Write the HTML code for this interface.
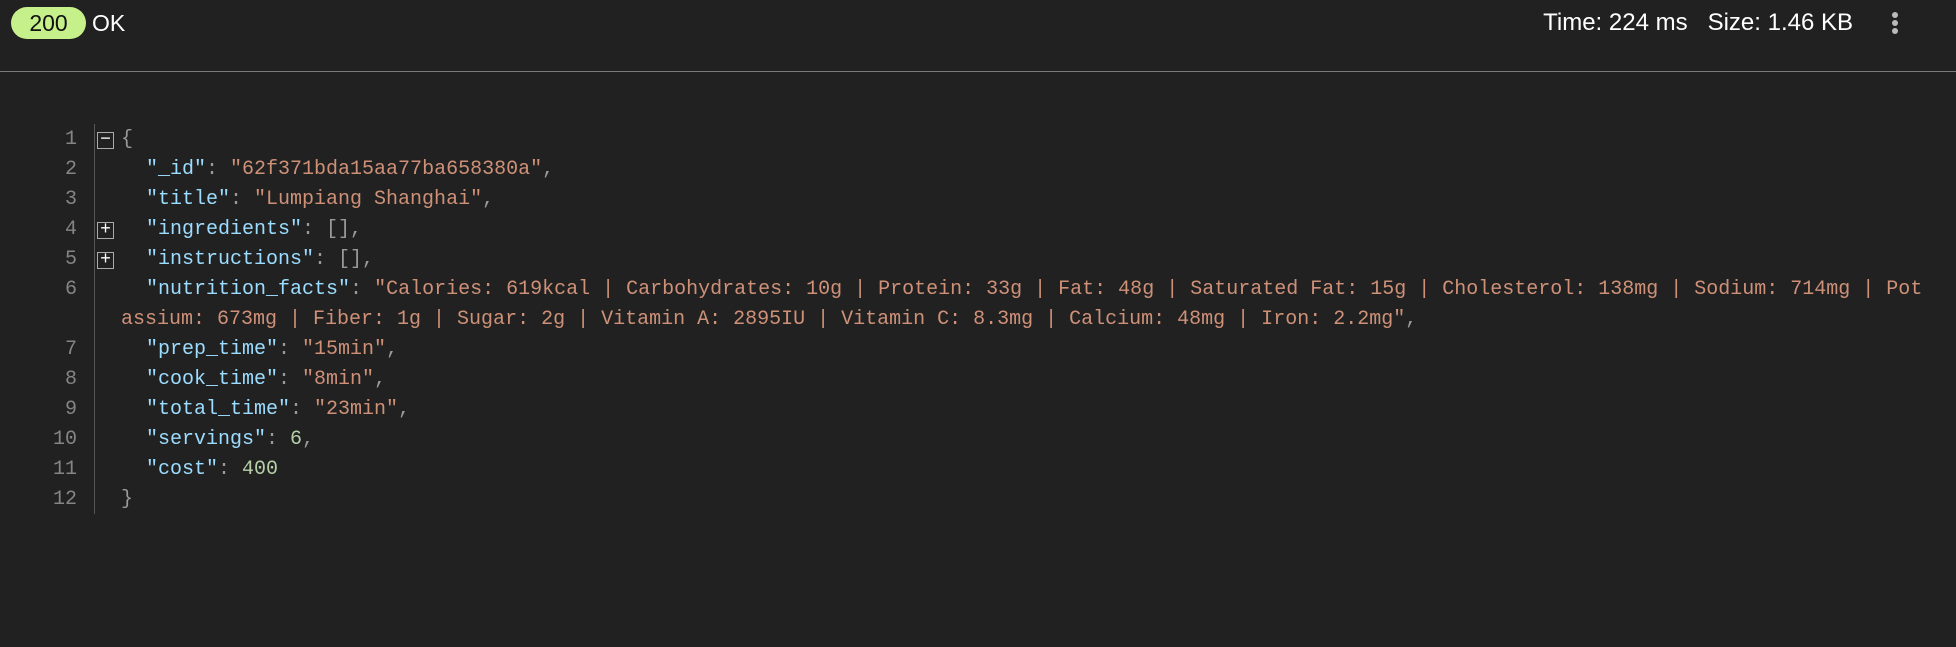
<!DOCTYPE html>
<html><head><meta charset="utf-8"><style>
html,body{margin:0;padding:0;background:#212121;width:1956px;height:647px;overflow:hidden;font-family:"Liberation Sans",Arial,sans-serif;}
.hdr{position:absolute;left:0;top:0;width:1956px;height:71px;border-bottom:1px solid #7a7a7a;}
.badge{position:absolute;left:11px;top:7px;width:75px;height:32px;border-radius:16px;background:#c5f08a;color:#111;font-size:23px;line-height:32px;text-align:center;}
.ok{position:absolute;left:92px;top:7px;color:#fff;font-size:23px;line-height:32px;}
.meta{position:absolute;right:103px;top:7px;color:#fff;font-size:24px;line-height:32px;white-space:pre;}
.dot{position:absolute;left:1892px;width:6px;height:6px;border-radius:3px;background:#bbb;}
.ln{position:absolute;left:0;width:77px;text-align:right;color:#858585;}
.gut{position:absolute;left:94px;top:124px;width:1px;height:390px;background:#555;}
.row{position:absolute;white-space:pre;color:#9a9a9a;}
.k{color:#9cdcfe}.s{color:#ce9178}.n{color:#b5cea8}
.box{position:absolute;left:97px;width:17px;height:17px;border:1px solid #aaa;color:#fff;font-size:18px;line-height:15px;text-align:center;box-sizing:border-box;}
</style></head><body>
<div class="hdr">
<div class="badge">200</div><div class="ok">OK</div>
<div class="meta">Time: 224 ms   Size: 1.46 KB</div>
<div class="dot" style="top:12px"></div><div class="dot" style="top:20px"></div><div class="dot" style="top:28px"></div>
</div>
<div class="gut"></div>
<div style="position:absolute;top:3px;left:0;font-family:'Liberation Mono','Courier New',monospace;font-size:20px;line-height:30px;">
<div class="ln" style="top:122px">1</div>
<div class="ln" style="top:152px">2</div>
<div class="ln" style="top:182px">3</div>
<div class="ln" style="top:212px">4</div>
<div class="ln" style="top:242px">5</div>
<div class="ln" style="top:272px">6</div>
<div class="ln" style="top:332px">7</div>
<div class="ln" style="top:362px">8</div>
<div class="ln" style="top:392px">9</div>
<div class="ln" style="top:422px">10</div>
<div class="ln" style="top:452px">11</div>
<div class="ln" style="top:482px">12</div>
<div class="box" style="top:129px">−</div>
<div class="box" style="top:219px">+</div>
<div class="box" style="top:249px">+</div>
<div class="row" style="top:122px;left:121px">{</div>
<div class="row" style="top:152px;left:146px"><span class="k">"_id"</span>: <span class="s">"62f371bda15aa77ba658380a"</span>,</div>
<div class="row" style="top:182px;left:146px"><span class="k">"title"</span>: <span class="s">"Lumpiang Shanghai"</span>,</div>
<div class="row" style="top:212px;left:146px"><span class="k">"ingredients"</span>: [],</div>
<div class="row" style="top:242px;left:146px"><span class="k">"instructions"</span>: [],</div>
<div class="row" style="top:272px;left:146px"><span class="k">"nutrition_facts"</span>: <span class="s">"Calories: 619kcal | Carbohydrates: 10g | Protein: 33g | Fat: 48g | Saturated Fat: 15g | Cholesterol: 138mg | Sodium: 714mg | Pot</span></div>
<div class="row" style="top:302px;left:121px"><span class="s">assium: 673mg | Fiber: 1g | Sugar: 2g | Vitamin A: 2895IU | Vitamin C: 8.3mg | Calcium: 48mg | Iron: 2.2mg"</span>,</div>
<div class="row" style="top:332px;left:146px"><span class="k">"prep_time"</span>: <span class="s">"15min"</span>,</div>
<div class="row" style="top:362px;left:146px"><span class="k">"cook_time"</span>: <span class="s">"8min"</span>,</div>
<div class="row" style="top:392px;left:146px"><span class="k">"total_time"</span>: <span class="s">"23min"</span>,</div>
<div class="row" style="top:422px;left:146px"><span class="k">"servings"</span>: <span class="n">6</span>,</div>
<div class="row" style="top:452px;left:146px"><span class="k">"cost"</span>: <span class="n">400</span></div>
<div class="row" style="top:482px;left:121px">}</div>
</div>
</body></html>
